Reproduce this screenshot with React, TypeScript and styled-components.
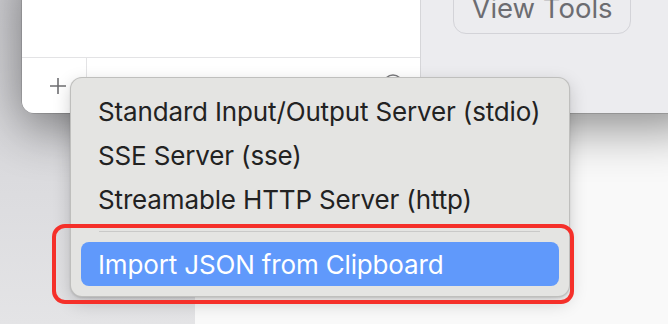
import React from "react";
import styled, {createGlobalStyle} from "styled-components";

const GlobalStyle = createGlobalStyle`
    html, body {
        margin: 0;
        padding: 0;
        background: #f8f8f8;
        overflow: hidden;
    }
    * {
        box-sizing: border-box;
    }
`;

const menuItems = [
    "Standard Input/Output Server (stdio)",
    "SSE Server (sse)",
    "Streamable HTTP Server (http)",
];

const App = () => {
    return (
        <>
            <GlobalStyle />
            <Desktop>
                <BackWindow />
                <MainWindow>
                    <Sidebar>
                        <ServerList />
                        <SidebarFooter>
                            <AddButton>
                                <svg width="20" height="20" viewBox="0 0 20 20">
                                    <path d="M10 2v16M2 10h16" stroke="#6f6f72" strokeWidth="1.6" fill="none" />
                                </svg>
                            </AddButton>
                            <FooterSpacer />
                            <MoreButton>
                                <svg width="22" height="22" viewBox="0 0 22 22">
                                    <circle cx="11" cy="11" r="9" stroke="#7a7a7d" strokeWidth="1.5" fill="none" />
                                </svg>
                            </MoreButton>
                        </SidebarFooter>
                    </Sidebar>
                    <Detail>
                        <ToolsButton>View Tools</ToolsButton>
                    </Detail>
                </MainWindow>
                <Menu>
                    {menuItems.map((label) => (
                        <MenuItem key={label}>{label}</MenuItem>
                    ))}
                    <Separator />
                    <MenuItem active>Import JSON from Clipboard</MenuItem>
                </Menu>
                <Highlight />
            </Desktop>
        </>
    );
};
export default App;

const Desktop = styled.div`
    position: relative;
    width: 668px;
    height: 324px;
    overflow: hidden;
    background: #f9f9f9;
    font-family: Inter, "Liberation Sans", sans-serif;
`;

const BackWindow = styled.div`
    position: absolute;
    left: 0;
    top: 0;
    width: 195px;
    height: 324px;
    background: linear-gradient(180deg, #cfcfd3 0%, #dcdcdf 60%, #e4e4e6 100%);
`;

const MainWindow = styled.div`
    position: absolute;
    left: 22px;
    top: -40px;
    width: 680px;
    height: 153px;
    display: flex;
    border-radius: 0 0 12px 12px;
    overflow: hidden;
    box-shadow: 0 14px 50px rgba(0, 0, 0, 0.45), 0 0 0 0.5px rgba(0, 0, 0, 0.25);
`;

const Sidebar = styled.div`
    width: 399px;
    display: flex;
    flex-direction: column;
    background: #ffffff;
    border-right: 1px solid #d6d6d9;
`;

const ServerList = styled.div`
    height: 98px;
    border-bottom: 1px solid #e3e3e5;
`;

const SidebarFooter = styled.div`
    flex: 1;
    display: flex;
    align-items: center;
`;

const AddButton = styled.div`
    width: 65px;
    height: 100%;
    display: flex;
    align-items: center;
    justify-content: center;
    padding-left: 8px;
    border-right: 1px solid #e3e3e5;
`;

const FooterSpacer = styled.div`
    flex: 1;
`;

const MoreButton = styled.div`
    width: 22px;
    height: 22px;
    margin-right: 16px;
    margin-top: -4px;
`;

const Detail = styled.div`
    flex: 1;
    background: #ececef;
    padding: 24px 0 0 32px;
`;

const ToolsButton = styled.div`
    width: 178px;
    height: 50px;
    border: 1.5px solid #d3d3d8;
    border-radius: 13px;
    display: flex;
    align-items: center;
    justify-content: center;
    padding-bottom: 2px;
    font-size: 27.5px;
    color: #6c6c71;
`;

const Menu = styled.div`
    position: absolute;
    left: 70px;
    top: 77px;
    width: 500px;
    padding: 11px 10px 10px;
    background: #e4e4e2;
    border-radius: 12px;
    border: 1px solid rgba(0, 0, 0, 0.16);
    box-shadow: 0 6px 18px rgba(0, 0, 0, 0.18), 0 1px 2px rgba(0, 0, 0, 0.12);
`;

const MenuItem = styled.div<{active?: boolean}>`
    height: 44px;
    display: flex;
    align-items: center;
    padding-left: 17px;
    border-radius: 8px;
    font-size: 26px;
    letter-spacing: -0.15px;
    color: ${({active}) => (active ? "#ffffff" : "#222222")};
    background: ${({active}) => (active ? "#6099fb" : "transparent")};
`;

const Separator = styled.div`
    height: 1px;
    margin: 10px 19px 10px 18px;
    background: #c9c9c8;
`;

const Highlight = styled.div`
    position: absolute;
    left: 52px;
    top: 224px;
    width: 522px;
    height: 80px;
    border: 4px solid #f5302a;
    border-radius: 13px;
`;
